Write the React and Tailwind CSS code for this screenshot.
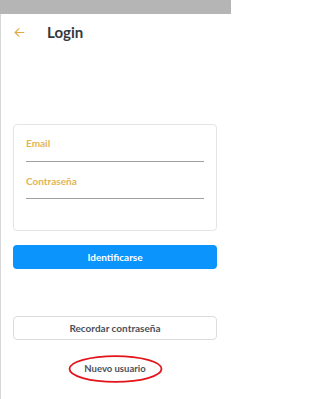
export default function App() {
  return (
    <div className="w-[231px] h-[399px] bg-white font-['Lato',sans-serif] flex flex-col">
      <div className="h-[14px] bg-[#b5b5b5] shrink-0" />
      <div className="flex-1 flex flex-col border-l border-[#d6d6d6] pl-[12px] pr-[14px]">
        <div className="flex items-center h-[20px] mt-[8px]">
          <svg width="13" height="13" viewBox="0 0 24 24" fill="none" stroke="#e3a845" strokeWidth="2" strokeLinecap="round" strokeLinejoin="round">
            <path d="M20 12H4" />
            <path d="M11 5l-7 7 7 7" />
          </svg>
          <h1 className="ml-[21px] text-[15px] font-bold text-[#333a40]">Login</h1>
        </div>

        <form className="mt-[82px] border border-[#e4e4e4] rounded-[4px] px-[12px] pt-[11px] pb-[31px] flex flex-col gap-[12px]">
          <div>
            <label className="block text-[10px] leading-[14px] font-bold text-[#e3b456]">Email</label>
            <input type="email" className="block w-full h-[12px] border-b border-[#a0a0a0] outline-none" />
          </div>
          <div>
            <label className="block text-[10px] leading-[14px] font-bold text-[#e3b456]">Contraseña</label>
            <input type="password" className="block w-full h-[11px] border-b border-[#a0a0a0] outline-none" />
          </div>
        </form>

        <button type="button" className="mt-[14px] h-[24px] rounded-[4px] bg-[#0a94fc] text-white text-[10px] font-bold">
          Identificarse
        </button>

        <button type="button" className="mt-[47px] h-[24px] rounded-[4px] bg-white border border-[#dcdcdc] text-[#4b505c] text-[10px] font-bold">
          Recordar contraseña
        </button>

        <div className="relative mt-[15px] h-[28px] flex items-center justify-center">
          <span className="text-[9.5px] font-bold text-[#4b505c]">Nuevo usuario</span>
          <svg className="absolute left-[55px] top-0" width="95" height="28" viewBox="0 0 95 28" fill="none">
            <ellipse cx="47.5" cy="14" rx="46" ry="12.8" stroke="#e2141a" strokeWidth="1.8" />
          </svg>
        </div>
      </div>
    </div>
  )
}
